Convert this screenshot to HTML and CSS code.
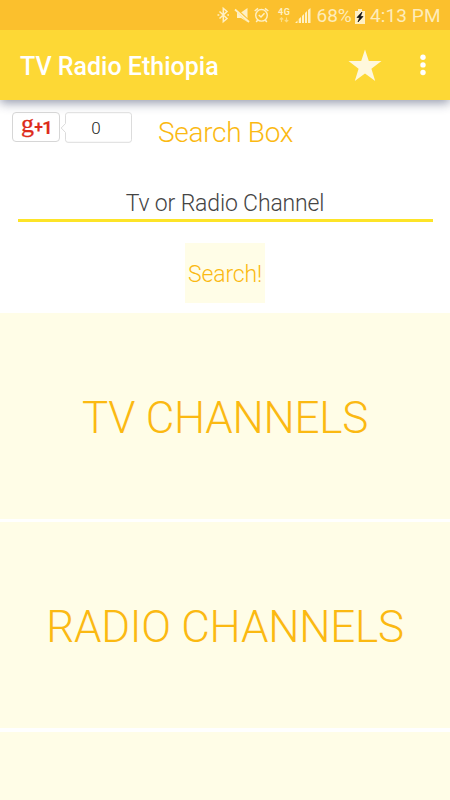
FILE: index.html
```html
<!DOCTYPE html>
<html lang="en">
<head>
  <meta charset="UTF-8" />
  <meta name="viewport" content="width=device-width, initial-scale=1.0"/>
  <title>TV Radio Ethiopia</title>
  <link rel="stylesheet" href="styles.css">
</head>
<body>
  <!-- Status Bar -->
  <div class="status-bar">
    <svg class="status-icons" width="94" height="30" viewBox="0 0 94 30">
      <!-- bluetooth -->
      <path d="M2.5 11.5 L10 18.5 L6.3 21.7 V8.3 L10 11.5 L2.5 18.5" fill="none" stroke="#fff0c4" stroke-width="1.5"/>
      <path d="M0.5 15 H2.3 M10.3 15 H12" stroke="#fff0c4" stroke-width="1.5"/>
      <!-- muted -->
      <path d="M20 12.5 H24 L30.5 8 V22 L24 18 H20 Z" fill="#fff0c4"/>
      <path d="M18 8.5 L33 22.5" stroke="#fbc02d" stroke-width="3"/>
      <path d="M18 9.5 L32 22" stroke="#fff0c4" stroke-width="1.8"/>
      <!-- alarm -->
      <circle cx="44.5" cy="15.3" r="5.8" fill="none" stroke="#fff0c4" stroke-width="1.4"/>
      <path d="M41.8 15 L44 17 L47.5 13.3 M37.7 11 L41 8.3 M51.3 11 L48 8.3 M40.8 20 L39.2 22 M48.2 20 L49.8 22" fill="none" stroke="#fff0c4" stroke-width="1.5"/>
      <!-- network -->
      <text class="network" x="61" y="15" textLength="12">4G</text>
      <path d="M64.5 22 V18 M62.8 19.5 L64.5 17.7 L66.2 19.5 M69.5 17.5 V21.5 M67.8 20 L69.5 21.8 L71.2 20" fill="none" stroke="#fddd83" stroke-width="1.1"/>
      <!-- signal -->
      <path d="M78 23 L80.5 20.5 V23 Z M81.7 23 V19 L84 17 V23 Z M85 23 V16 L87 14 V23 Z M88 23 V13 L90 11 V23 Z M91 23 V10 L93.5 8 V23 Z" fill="#fff0c4"/>
    </svg>
    <span class="percent">68%</span>
    <svg class="battery" width="10" height="15" viewBox="0 0 10 15">
      <path d="M0 2 H3 V0 H7 V2 H10 V15 H0 Z" fill="#fff0c4"/>
      <path d="M7 3 L2 8.5 H4.7 L3 13 L8 7.5 H5.4 Z" fill="#111" stroke="#111" stroke-width="0.7"/>
    </svg>
    <span class="time">4:13 PM</span>
  </div>

  <!-- Title Bar -->
  <header>
    <h1>TV Radio Ethiopia</h1>
    <svg class="star" width="34" height="33" viewBox="0 0 34 33">
      <path d="M17 0.5 L20.8 12 H33.5 L23.4 19.7 L27.2 32 L17 24.6 L6.8 32 L10.6 19.7 L0.5 12 H13.2 Z" fill="#fff8dc"/>
    </svg>
    <svg class="menu" width="6" height="22" viewBox="0 0 6 22">
      <circle cx="3" cy="3.3" r="2.7" fill="#fff"/>
      <circle cx="3" cy="10.9" r="2.7" fill="#fff"/>
      <circle cx="3" cy="18.5" r="2.7" fill="#fff"/>
    </svg>
  </header>

  <!-- Search -->
  <main class="search">
    <div class="search-top">
      <div class="plus-one"><span class="plus-g">g</span><span class="plus-sign">+</span><span class="plus-num">1</span></div>
      <svg class="bubble" width="72" height="32" viewBox="0 0 72 32">
        <path d="M8 0.7 H69 Q71.5 0.7 71.5 3.2 V27.8 Q71.5 30.3 69 30.3 H8 Q5.5 30.3 5.5 27.8 V20.5 L1.2 16 L5.5 11.5 V3.2 Q5.5 0.7 8 0.7 Z" fill="#fff" stroke="#dcdcdc"/>
        <text class="count" x="36" y="21.5" text-anchor="middle">0</text>
      </svg>
      <h2>Search Box</h2>
    </div>
    <div class="field">Tv or Radio Channel</div>
    <button class="btn">Search!</button>
  </main>

  <!-- Channel Tiles -->
  <div class="tile">TV CHANNELS</div>
  <div class="tile tile-radio">RADIO CHANNELS</div>
  <div class="tile tile-last"></div>
</body>
</html>
```

FILE: styles.css
```css
body {
  font-family: Roboto, sans-serif;
  font-weight: 300;
  margin: 0;
  height: 800px;
  background: #fff;
  display: flex;
  flex-direction: column;
  overflow: hidden;
}

.status-bar {
  display: flex;
  flex: none;
  align-items: center;
  position: relative;
  z-index: 1;
  height: 30px;
  padding-left: 217px;
  background: #fbc02d;
  color: #feecba;
  font-size: 19px;
  font-weight: 400;
  line-height: 30px;
  white-space: nowrap;
}

.status-icons { flex: none; }

.network {
  font-size: 9px;
  font-weight: 700;
  fill: #fff0c4;
}

.percent {
  width: 35px;
  margin-left: 5.5px;
  padding-top: 2px;
}

.battery { margin: 2px 5px 0 3.5px; }

.time { padding-top: 2px; letter-spacing: 0.1px; }

header {
  display: flex;
  flex: none;
  align-items: center;
  height: 70px;
  padding: 0 24px 0 20px;
  box-sizing: border-box;
  background: #fdd835;
  box-shadow: 0 3px 10px rgba(20, 30, 70, 0.45);
}

h1 {
  flex: 1;
  margin: 3px 0 0;
  color: #fff;
  font-size: 25px;
  font-weight: 500;
  line-height: 30px;
}

.star { margin: 1px 38px 0 0; }

.search {
  flex: none;
  height: 213px;
  text-align: center;
}

.search-top {
  display: flex;
  height: 82px;
  padding: 12px 0 0 12px;
  box-sizing: border-box;
}

.plus-one {
  display: flex;
  width: 48px;
  height: 30px;
  box-sizing: border-box;
  padding-left: 8px;
  border: 1px solid #d6d6d6;
  border-radius: 4px;
  color: #dd2c1b;
}

.plus-g {
  font-family: "Liberation Serif", serif;
  font-size: 26px;
  font-weight: 400;
  line-height: 22px;
  -webkit-text-stroke: 0.3px #dd2c1b;
}

.plus-sign {
  width: 9px;
  font-size: 16px;
  font-weight: 700;
  line-height: 29px;
}

.plus-num {
  font-size: 19px;
  font-weight: 700;
  line-height: 29px;
  margin-left: -1px;
}

.count {
  font-size: 17px;
  fill: #222;
}

h2 {
  margin: 4px 0 0 26px;
  color: #fbb912;
  font-size: 28px;
  font-weight: 300;
  line-height: 34px;
  letter-spacing: -0.3px;
}

.field {
  height: 40px;
  margin: 0 17.5px;
  border-bottom: 3px solid #fde428;
  box-sizing: border-box;
  color: #444;
  font-size: 23px;
  line-height: 43px;
  letter-spacing: -0.15px;
}

.btn {
  width: 80px;
  height: 60px;
  margin-top: 21px;
  padding: 2px 0 0;
  border: none;
  background: #fffde7;
  color: #fbb912;
  font-family: Roboto, sans-serif;
  font-size: 23px;
  font-weight: 300;
  letter-spacing: -0.15px;
}

.tile {
  flex: none;
  height: 206px;
  margin-bottom: 3px;
  background: #fffde7;
  color: #fbb912;
  font-size: 44px;
  line-height: 211px;
  letter-spacing: -0.25px;
  text-align: center;
}

.tile-radio { margin-bottom: 4px; }

.tile-last {
  flex: 1;
  height: auto;
  margin-bottom: 0;
}
```
